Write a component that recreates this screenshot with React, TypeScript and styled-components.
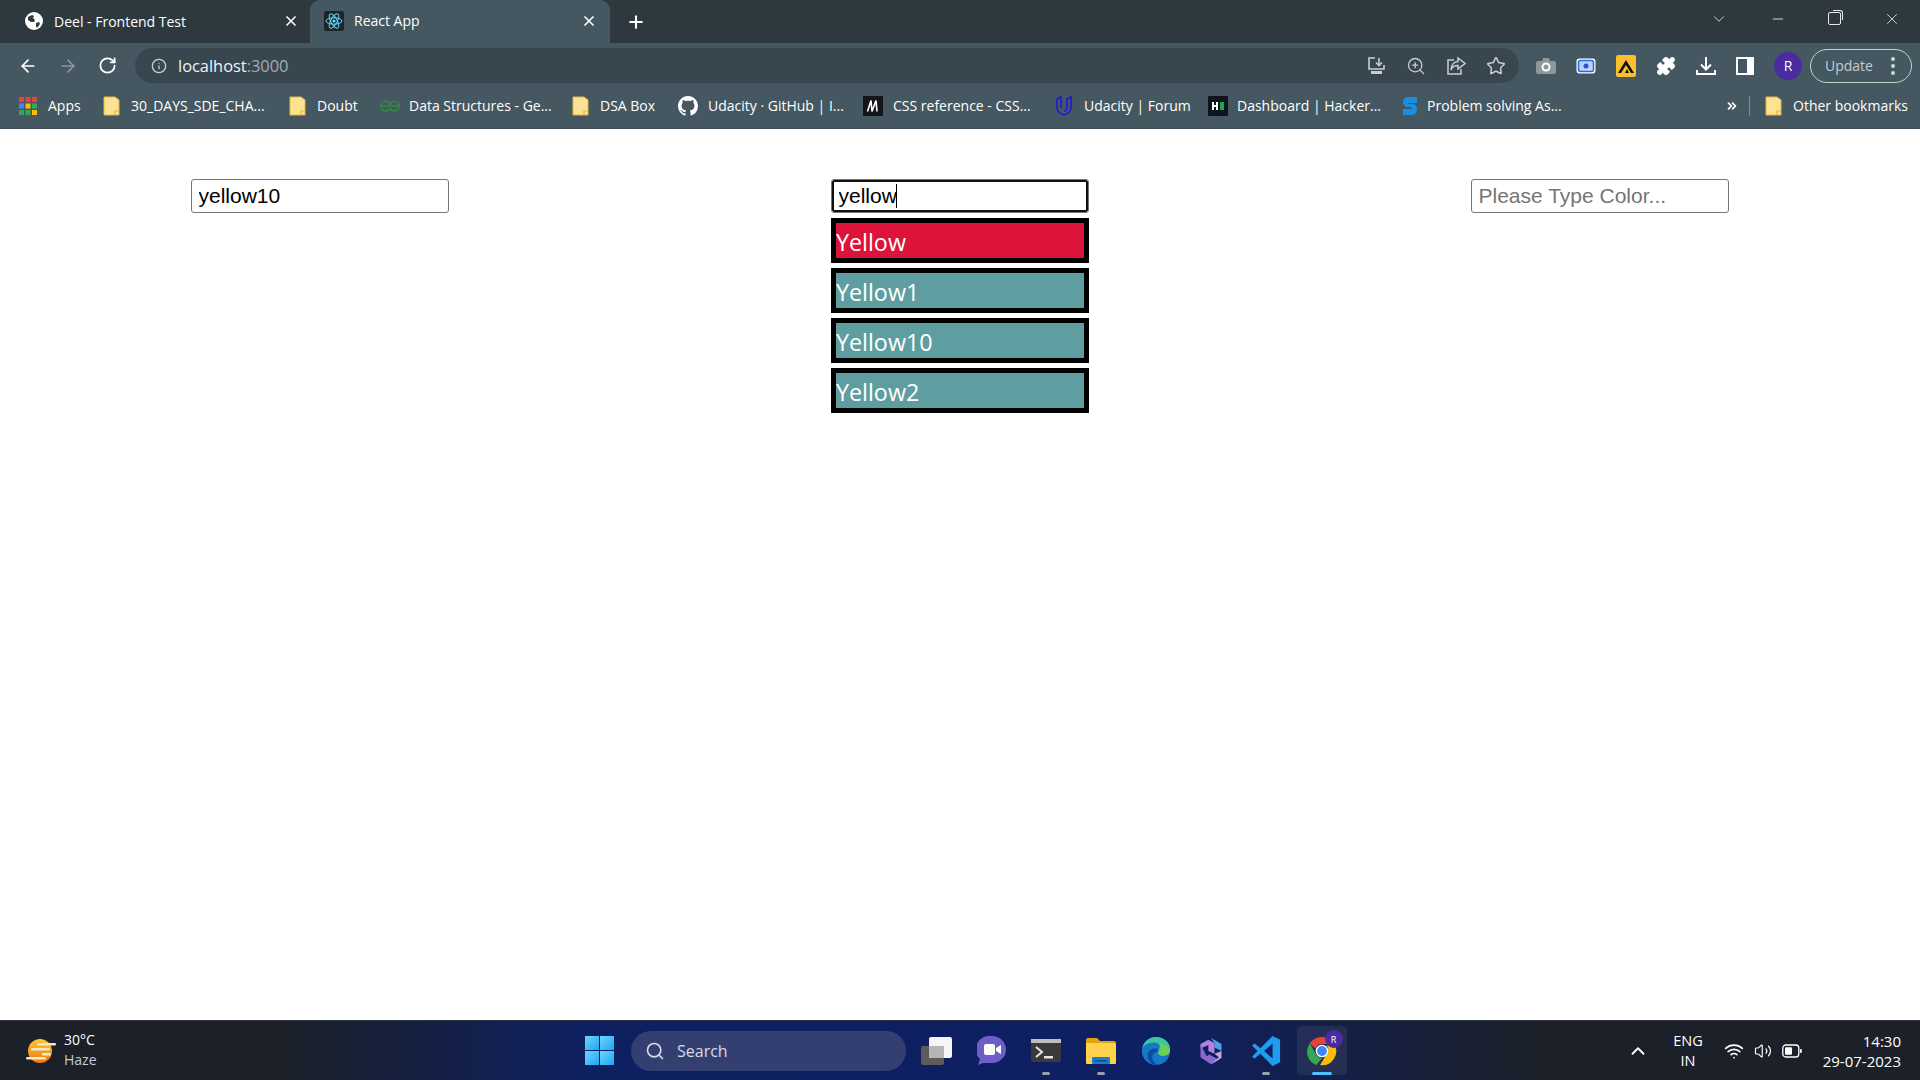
import React from "react";
import styled, { createGlobalStyle } from "styled-components";
import {
  ArrowLeft,
  ArrowRight,
  RotateCw,
  Info,
  ZoomIn,
  Star,
  Puzzle,
  X,
  Plus,
  Minus,
  ChevronDown,
  ChevronUp,
  ChevronsRight,
  Search,
  Wifi,
  Volume2,
} from "lucide-react";

const GlobalStyle = createGlobalStyle`
  html, body { margin: 0; padding: 0; height: 100%; background: #fff; overflow: hidden; }
  #root { height: 100%; }
`;

const UI_FONT = `"Open Sans", "Noto Sans", sans-serif`;

const Screen = styled.div`
  height: 1080px;
  display: flex;
  flex-direction: column;
  font-family: ${UI_FONT};
`;

/* ---------- browser chrome ---------- */

const TabStrip = styled.div`
  height: 43px;
  background: #2d383f;
  display: flex;
  align-items: flex-end;
  color: #fff;
  font-size: 14px;
`;

const Tab = styled.div<{ $active?: boolean; $w: number }>`
  width: ${(p) => p.$w}px;
  height: ${(p) => (p.$active ? 43 : 42)}px;
  background: ${(p) => (p.$active ? "#455761" : "transparent")};
  border-radius: 10px 10px 0 0;
  display: flex;
  align-items: center;
  padding: 0 ${(p) => (p.$active ? 13 : 11)}px 2px ${(p) => (p.$active ? 14 : 25)}px;
  box-sizing: border-box;
  gap: ${(p) => (p.$active ? 10 : 11)}px;
  flex-shrink: 0;
`;

const TabTitle = styled.span`
  flex: 1;
  white-space: nowrap;
`;

const NewTab = styled.div`
  margin-left: 16px;
  height: 42px;
  display: flex;
  align-items: center;
`;

const WindowControls = styled.div`
  margin-left: auto;
  height: 43px;
  display: flex;
  align-items: center;
  gap: 42px;
  padding: 0 19px 6px 0;
  box-sizing: border-box;
`;

const RestoreIcon = styled.div`
  width: 11px;
  height: 11px;
  border: 1px solid #e8eaed;
  border-radius: 2px;
  position: relative;
  &::after {
    content: "";
    position: absolute;
    top: -3px;
    right: -3px;
    width: 9px;
    height: 9px;
    border-top: 1px solid #e8eaed;
    border-right: 1px solid #e8eaed;
    border-radius: 0 3px 0 0;
  }
`;

const Toolbar = styled.div`
  height: 40px;
  background: #455761;
  display: flex;
  align-items: flex-end;
  padding-left: 18px;
  color: #fff;
`;

const NavButtons = styled.div`
  height: 35px;
  display: flex;
  align-items: center;
  gap: 20px;
  margin-right: 18px;
`;

const Omnibox = styled.div`
  width: 1384px;
  height: 35px;
  border-radius: 18px;
  background: #384650;
  display: flex;
  align-items: center;
  padding: 0 13px 0 16px;
  box-sizing: border-box;
  flex-shrink: 0;
`;

const Url = styled.span`
  margin-left: 11px;
  font-size: 16.4px;
  color: #f1f3f4;
  flex: 1;
`;

const UrlPort = styled.span`
  color: #a3adb3;
`;

const OmniActions = styled.div`
  display: flex;
  align-items: center;
  gap: 20px;
  color: #c7cdd1;
`;

const Extensions = styled.div`
  height: 35px;
  display: flex;
  align-items: center;
  gap: 20px;
  margin-left: 17px;
`;

const ProfileGroup = styled.div`
  display: flex;
  align-items: center;
  gap: 8px;
`;

const Avatar = styled.div<{ $size: number }>`
  width: ${(p) => p.$size}px;
  height: ${(p) => p.$size}px;
  border-radius: 50%;
  background: #4a2ca0;
  color: #fff;
  display: flex;
  align-items: center;
  justify-content: center;
  font-size: ${(p) => Math.round(p.$size / 2)}px;
`;

const UpdatePill = styled.div`
  width: 102px;
  height: 34px;
  border: 1px solid #c3d6c8;
  border-radius: 17px;
  display: flex;
  align-items: center;
  justify-content: space-between;
  padding: 0 16px 0 14px;
  box-sizing: border-box;
  font-size: 14px;
  color: #c4ced1;
`;

const Dots = styled.div`
  display: flex;
  flex-direction: column;
  gap: 3px;
  i {
    display: block;
    width: 4px;
    height: 4px;
    border-radius: 50%;
    background: #c9dccd;
  }
`;

const BookmarkBar = styled.div`
  height: 45px;
  background: #455761;
  border-bottom: 1px solid #3b4a53;
  box-sizing: content-box;
  display: flex;
  align-items: center;
  padding-left: 19px;
  color: #fff;
  font-size: 14px;
`;

const Bookmark = styled.div<{ $w: number; $gap?: number }>`
  width: ${(p) => p.$w}px;
  flex-shrink: 0;
  display: flex;
  align-items: center;
  gap: ${(p) => p.$gap ?? 11}px;
  white-space: nowrap;
`;

const BarEnd = styled.div`
  margin-left: auto;
  display: flex;
  align-items: center;
  padding-right: 12px;
`;

const Divider = styled.div`
  width: 1px;
  height: 20px;
  background: #7b8a93;
  margin: 0 15px 0 10px;
`;

/* ---------- page ---------- */

const Page = styled.main`
  flex: 1;
  background: #fff;
  display: flex;
  justify-content: space-around;
  align-items: flex-start;
  padding-top: 50px;
`;

const Column = styled.div`
  width: 258px;
  display: flex;
  flex-direction: column;
  gap: 5px;
`;

const Field = styled.div`
  position: relative;
  height: 34px;
`;

const ColorInput = styled.input<{ $focused?: boolean }>`
  width: 100%;
  height: 34px;
  box-sizing: border-box;
  display: block;
  padding: 1px 6px 1px 6.5px;
  border: 1px solid #767676;
  border-radius: 3px;
  font-family: "Liberation Sans", Arial, sans-serif;
  font-size: 21px;
  color: #000;
  background: #fff;
  outline: none;
  caret-color: transparent;
  box-shadow: ${(p) => (p.$focused ? "inset 0 0 0 2px #101010" : "none")};
  &::placeholder {
    color: #757575;
    opacity: 1;
  }
`;

const Caret = styled.span`
  position: absolute;
  left: 65px;
  top: 5px;
  width: 1px;
  height: 24px;
  background: #000;
`;

const Suggestion = styled.div<{ $active?: boolean }>`
  height: 45px;
  box-sizing: border-box;
  border: 5px solid #000;
  background: ${(p) => (p.$active ? "#dc143c" : "#5f9ea0")};
  color: #fff;
  font-family: ${UI_FONT};
  font-size: 23.3px;
  line-height: 38px;
  white-space: nowrap;
`;

/* ---------- taskbar ---------- */

const Taskbar = styled.div`
  height: 60px;
  box-sizing: border-box;
  border-top: 1px solid #2c3140;
  background: linear-gradient(90deg, #1b2029 0%, #1b2029 15%, #0f2060 30%, #0e1f62 60%, #1b2029 80%, #1b2029 100%);
  display: flex;
  align-items: center;
  color: #fff;
  position: relative;
`;

const Weather = styled.div`
  width: 585px;
  flex-shrink: 0;
  display: flex;
  align-items: center;
  gap: 8px;
  padding-left: 26px;
  box-sizing: border-box;
`;

const WeatherText = styled.div`
  font-size: 14px;
  line-height: 20px;
  margin-top: -2px;
  span {
    display: block;
    color: #c8ccd2;
  }
`;

const StartLogo = styled.div`
  width: 29px;
  height: 29px;
  display: grid;
  grid-template-columns: 1fr 1fr;
  gap: 1px;
  margin-right: 17px;
  i {
    display: block;
    background: linear-gradient(135deg, #6fd6fb, #1ea5f5);
  }
`;

const SearchBox = styled.div`
  width: 275px;
  height: 40px;
  border-radius: 20px;
  background: #333f70;
  display: flex;
  align-items: center;
  gap: 12px;
  padding-left: 14px;
  box-sizing: border-box;
  font-size: 16px;
  color: #d8dbe4;
  margin-right: 2.5px;
`;

const TaskIcon = styled.div<{ $active?: boolean }>`
  width: 50px;
  height: 49px;
  margin: 0 ${(p) => (p.$active ? 3 : 2.5)}px;
  border-radius: 5px;
  background: ${(p) => (p.$active ? "rgba(255,255,255,0.07)" : "transparent")};
  display: flex;
  align-items: center;
  justify-content: center;
  position: relative;
`;

const RunDot = styled.i<{ $active?: boolean }>`
  position: absolute;
  bottom: 0;
  left: 50%;
  transform: translateX(-50%);
  width: ${(p) => (p.$active ? 20 : 8)}px;
  height: 3px;
  border-radius: 2px;
  background: ${(p) => (p.$active ? "#4cc2ff" : "#9aa0ab")};
`;

const Tray = styled.div`
  margin-left: auto;
  display: flex;
  align-items: center;
  padding-right: 19px;
`;

const Lang = styled.div`
  font-size: 14.5px;
  line-height: 20px;
  text-align: center;
  margin: 0 21px 0 24px;
`;

const TrayIcons = styled.div`
  display: flex;
  align-items: center;
  gap: 10px;
  margin-right: 21px;
`;

const Clock = styled.div`
  font-size: 15px;
  line-height: 20px;
  text-align: right;
`;

const ProfileBadge = styled.div`
  position: absolute;
  top: 4px;
  right: 4px;
`;

/* ---------- drawn icons ---------- */

const GlobeIcon = () => (
  <svg width="18" height="18" viewBox="0 0 18 18">
    <circle cx="9" cy="9" r="9" fill="#fff" />
    <path d="M3 5l4-2 2 1-1 2 2 2-1 2H6L3 8zM11 11l3-1 1 2-3 4-1-2z" fill="#2d383f" />
  </svg>
);

const ReactIcon = () => (
  <svg width="20" height="20" viewBox="0 0 20 20">
    <rect width="20" height="20" rx="2" fill="#20232a" />
    <g fill="none" stroke="#61dafb" strokeWidth="1">
      <ellipse cx="10" cy="10" rx="8" ry="3.2" />
      <ellipse cx="10" cy="10" rx="8" ry="3.2" transform="rotate(60 10 10)" />
      <ellipse cx="10" cy="10" rx="8" ry="3.2" transform="rotate(120 10 10)" />
    </g>
    <circle cx="10" cy="10" r="1.6" fill="#61dafb" />
  </svg>
);

const AppsIcon = () => {
  const colors = ["#ea4335", "#ea4335", "#ea4335", "#4285f4", "#fbbc04", "#34a853", "#34a853", "#34a853", "#fbbc04"];
  return (
    <svg width="18" height="18" viewBox="0 0 18 18">
      {colors.map((c, i) => (
        <rect key={i} x={(i % 3) * 6.5} y={Math.floor(i / 3) * 6.5} width="5" height="5" fill={c} />
      ))}
    </svg>
  );
};

const FolderIcon = () => (
  <svg width="17" height="20" viewBox="0 0 17 20">
    <path d="M1 1h11l4 3v15H1z" fill="#fde293" stroke="#e3b93f" strokeWidth="1" />
    <path d="M12 19v-4h4" fill="none" stroke="#e3b93f" strokeWidth="1.2" />
  </svg>
);

const GfgIcon = () => (
  <svg width="20" height="12" viewBox="0 0 20 12" fill="none" stroke="#2f8d46" strokeWidth="1.5">
    <path d="M1 6h18M10 6c0-3-2-5-4.500-5S1 3 1 6s2 5 4.500 5c2 0 3.500-1 4.500-3M10 6c0-3 2-5 4.500-5S19 3 19 6s-2 5-4.500 5c-2 0-3.500-1-4.500-3" />
  </svg>
);

const GithubIcon = () => (
  <svg width="20" height="20" viewBox="0 0 16 16" fill="#fff">
    <path d="M8 0C3.580 0 0 3.580 0 8c0 3.540 2.290 6.530 5.470 7.590.4.070.55-.17.55-.38 0-.19-.01-.82-.01-1.490-2.010.37-2.530-.49-2.690-.94-.09-.23-.48-.94-.82-1.130-.28-.15-.68-.52-.01-.53.63-.01 1.080.58 1.230.82.720 1.210 1.870.870 2.330.660.070-.52.280-.870.510-1.070-1.780-.2-3.640-.89-3.640-3.950 0-.87.310-1.590.820-2.150-.08-.2-.36-1.020.08-2.120 0 0 .67-.21 2.200.820.640-.18 1.320-.27 2-.27s1.360.09 2 .27c1.530-1.040 2.200-.82 2.200-.82.440 1.100.160 1.920.080 2.120.510.560.820 1.270.820 2.150 0 3.070-1.870 3.750-3.650 3.950.29.250.540.730.540 1.480 0 1.070-.01 1.930-.01 2.200 0 .210.150.460.550.380A8.010 8.010 0 0016 8c0-4.420-3.580-8-8-8z" />
  </svg>
);

const MdnIcon = () => (
  <svg width="20" height="20" viewBox="0 0 20 20">
    <rect width="20" height="20" fill="#15141a" />
    <path d="M4.500 15.500L8 4.500l1 11 4-11 1 11" fill="none" stroke="#fff" strokeWidth="1.600" />
  </svg>
);

const UdacityIcon = () => (
  <svg width="18" height="20" viewBox="0 0 18 20" fill="none" stroke="#2015d8" strokeWidth="1.600">
    <path d="M2 3v9c0 3 3 6 7 7 4-1 7-4 7-7V1l-4 2v9c0 1.500-1.500 3-3 3" />
    <path d="M2 3l4-2v11" />
  </svg>
);

const HackerRankIcon = () => (
  <svg width="20" height="20" viewBox="0 0 20 20">
    <rect width="20" height="20" rx="1" fill="#0e141e" />
    <path d="M4 6h2v3h2V6h2v8H8v-3H6v3H4z" fill="#fff" />
    <rect x="12" y="6" width="4" height="8" fill="#1ba94c" />
  </svg>
);

const SIcon = () => (
  <svg width="16" height="20" viewBox="0 0 16 20">
    <path d="M15 1H6C3 1 1 3 1 6s2 5 5 5h3c1 0 1 2 0 2H1v6h9c3 0 5-3 5-6s-2-5-5-5H7c-1 0-1-1 0-1h8z" fill="#1a8fe0" />
  </svg>
);

const InstallIcon = () => (
  <svg width="20" height="20" viewBox="0 0 20 20" fill="none" stroke="#c7cdd1" strokeWidth="1.600">
    <path d="M9 2H3v11h15V9" />
    <path d="M13 2v7M10 6.500l3 3 3-3" />
    <rect x="5" y="15" width="11" height="3" fill="#c7cdd1" stroke="none" />
  </svg>
);

const ShareIcon = () => (
  <svg width="20" height="20" viewBox="0 0 20 20" fill="none" stroke="#c7cdd1" strokeWidth="1.500">
    <path d="M8 4H2v14h13v-5" />
    <path d="M12 2l7 5.500-7 5.500V9.500C8.500 9.500 6 11 5 14c0-5 3-8.500 7-8.500z" />
  </svg>
);

const CameraIcon = () => (
  <svg width="20" height="18" viewBox="0 0 20 18">
    <path d="M2 4h4l1-3h6l1 3h4a2 2 0 012 2v9a2 2 0 01-2 2H2a2 2 0 01-2-2V6a2 2 0 012-2z" fill="#8e979c" />
    <circle cx="10" cy="10" r="4.500" fill="#fff" />
    <circle cx="10" cy="10" r="2.500" fill="#8e979c" />
  </svg>
);

const RecordIcon = () => (
  <svg width="20" height="16" viewBox="0 0 20 16">
    <rect x="0.500" y="0.500" width="19" height="15" rx="3" fill="#fff" />
    <rect x="2.500" y="2.500" width="15" height="11" rx="2" fill="#bcd4f8" stroke="#1a6fe0" strokeWidth="1.500" />
    <circle cx="10" cy="8" r="2.500" fill="#3450d0" />
  </svg>
);

const YellowExtIcon = () => (
  <svg width="20" height="22" viewBox="0 0 20 22">
    <rect width="20" height="22" rx="2" fill="#fbc02d" />
    <path d="M2 18L10 5l8 13h-3L10 10l-5 8z" fill="#111" />
    <path d="M9 18l2-4 2 4z" fill="#111" />
  </svg>
);

const DownloadIcon = () => (
  <svg width="20" height="20" viewBox="0 0 20 20" fill="none" stroke="#fff" strokeWidth="2">
    <path d="M10 1v12M5 8.500l5 5 5-5M1 14v4h18v-4" />
  </svg>
);

const SidePanelIcon = () => (
  <svg width="18" height="18" viewBox="0 0 18 18">
    <rect width="18" height="18" fill="#fff" />
    <rect x="2" y="2" width="9" height="14" fill="#455761" />
  </svg>
);

const WeatherIcon = () => (
  <svg width="30" height="30" viewBox="0 0 30 30">
    <defs>
      <linearGradient id="sun" x1="0" y1="0" x2="0" y2="1">
        <stop offset="0" stopColor="#fdc830" />
        <stop offset="1" stopColor="#ee7a10" />
      </linearGradient>
    </defs>
    <circle cx="14" cy="15" r="12" fill="url(#sun)" />
    <g fill="#f6e7c8">
      <rect x="11" y="7" width="19" height="2.500" rx="1.200" />
      <rect x="5" y="12" width="19" height="2.500" rx="1.200" />
      <rect x="16" y="17" width="9" height="2.500" rx="1.200" />
      <rect x="0" y="21" width="20" height="2.500" rx="1.200" />
    </g>
  </svg>
);

const TaskViewIcon = () => (
  <svg width="31" height="28" viewBox="0 0 31 28">
    <rect x="0" y="9" width="23" height="19" rx="2" fill="#5c5c5c" />
    <rect x="8" y="0" width="23" height="21" rx="2" fill="#f5f5f5" />
    <rect x="8" y="9" width="15" height="12" fill="#b5b5b5" />
  </svg>
);

const MeetIcon = () => (
  <svg width="29" height="29" viewBox="0 0 29 29">
    <path d="M15 0a14 13.500 0 110 27H6l-5 2 2-6A14 13.500 0 0115 0z" fill="#6c5fc7" />
    <rect x="7" y="8" width="11" height="11" rx="2" fill="#fff" />
    <path d="M19 12l5-3v9l-5-3z" fill="#fff" />
  </svg>
);

const TerminalIcon = () => (
  <svg width="30" height="23" viewBox="0 0 30 23">
    <rect width="30" height="23" rx="2" fill="#3a3a3a" />
    <rect width="30" height="4" fill="#bdbdbd" />
    <path d="M5 8l6 5-6 5" fill="none" stroke="#e5e5e5" strokeWidth="2" />
    <rect x="13" y="17" width="9" height="2.500" fill="#e5e5e5" />
  </svg>
);

const ExplorerIcon = () => (
  <svg width="30" height="26" viewBox="0 0 30 26">
    <path d="M0 2a2 2 0 012-2h9l3 3h14a2 2 0 012 2v3H0z" fill="#e0a30e" />
    <rect y="5" width="30" height="21" rx="1" fill="#ffd24d" />
    <rect x="6" y="19" width="18" height="7" rx="1" fill="#1a7ed0" />
    <rect x="9" y="22" width="12" height="1.500" fill="#0c4a8a" />
  </svg>
);

const EdgeIcon = () => (
  <svg width="30" height="30" viewBox="0 0 32 32">
    <circle cx="16" cy="16" r="15" fill="#1679c8" />
    <path d="M1 15C2 6 9 1 16 1c9 0 15 6 15 13 0 5-4 7-8 7-3 0-5-2-5-4s2-3 2-5c0-4-3-5-6-5C7 7 2 10 1 15z" fill="#3bc8a0" />
    <path d="M20 8c6 1 10 4 11 8 0 3-3 5-8 5-2 0-4-1-5-3 2 0 3-1 3-4 0-2-1-4-1-6z" fill="#6ed04c" />
    <path d="M18 17c-3 0-6 2-6 6 0 3 2 6 6 8-8 0-11-6-11-10 0-5 4-8 8-8 3 0 4 2 3 4z" fill="#0c4f9e" />
  </svg>
);

const CopilotIcon = () => (
  <svg width="26" height="28" viewBox="0 0 28 32">
    <path d="M14 1l12 7v8l-8-4V7z" fill="#4aa3e0" />
    <path d="M2 8l9-5 7 4v12l-7-3V9L2 13z" fill="#b084e0" />
    <path d="M2 8v15l12 8 9-5-11-6-3 2z" fill="#8a6ad0" />
    <path d="M26 16v8l-12 7 9-8-5-4z" fill="#c7a4e8" />
  </svg>
);

const VsCodeIcon = () => (
  <svg width="30" height="30" viewBox="0 0 30 32">
    <path d="M22 0l8 4v24l-8 4-13-13-6 5-3-2 6-6-6-6 3-2 6 5z" fill="#1f9cf0" />
    <path d="M22 8l-9 8 9 8z" fill="#0e1f62" />
  </svg>
);

const ChromeIcon = () => (
  <svg width="30" height="30" viewBox="0 0 32 32">
    <path d="M16 1a15 15 0 0113 7.500H16a7.500 7.500 0 00-7 4.700L3 8A15 15 0 0116 1z" fill="#ea4335" />
    <path d="M3 8l6.500 11.300A7.500 7.500 0 0016 23.500L10 31A15 15 0 013 8z" fill="#34a853" />
    <path d="M29 8.500A15 15 0 0114 31l6.500-11A7.500 7.500 0 0021 10z" fill="#fbbc04" />
    <circle cx="16" cy="16" r="6" fill="#4285f4" stroke="#fff" strokeWidth="1.500" />
  </svg>
);

const BatteryIcon = () => (
  <svg width="20" height="14" viewBox="0 0 20 14" fill="none">
    <rect x="0.800" y="1" width="16" height="12" rx="3" stroke="#fff" strokeWidth="1.300" />
    <rect x="3" y="3.200" width="7" height="7.600" rx="1" fill="#fff" />
    <rect x="18" y="5" width="1.800" height="4" rx="0.800" fill="#fff" />
  </svg>
);

/* ---------- data ---------- */

const bookmarks: { label: string; icon: React.ReactNode; w: number; gap?: number }[] = [
  { label: "Apps", icon: <AppsIcon />, w: 84 },
  { label: "30_DAYS_SDE_CHA...", icon: <FolderIcon />, w: 186 },
  { label: "Doubt", icon: <FolderIcon />, w: 91 },
  { label: "Data Structures - Ge...", icon: <GfgIcon />, w: 192, gap: 9 },
  { label: "DSA Box", icon: <FolderIcon />, w: 106 },
  { label: "Udacity · GitHub | I...", icon: <GithubIcon />, w: 185, gap: 10 },
  { label: "CSS reference - CSS...", icon: <MdnIcon />, w: 192, gap: 10 },
  { label: "Udacity | Forum", icon: <UdacityIcon />, w: 153 },
  { label: "Dashboard | Hacker...", icon: <HackerRankIcon />, w: 194, gap: 9 },
  { label: "Problem solving As...", icon: <SIcon />, w: 300, gap: 9 },
];

const columns = ["yellow10", "yellow", ""];
const suggestions = ["Yellow", "Yellow1", "Yellow10", "Yellow2"];

const taskIcons: { icon: React.ReactNode; running?: boolean }[] = [
  { icon: <TaskViewIcon /> },
  { icon: <MeetIcon /> },
  { icon: <TerminalIcon />, running: true },
  { icon: <ExplorerIcon />, running: true },
  { icon: <EdgeIcon /> },
  { icon: <CopilotIcon /> },
  { icon: <VsCodeIcon />, running: true },
];

export default function App() {
  return (
    <Screen>
      <GlobalStyle />
      <TabStrip>
        <Tab $w={310}>
          <GlobeIcon />
          <TabTitle>Deel - Frontend Test</TabTitle>
          <X size={16} strokeWidth={2.5} />
        </Tab>
        <Tab $w={300} $active>
          <ReactIcon />
          <TabTitle>React App</TabTitle>
          <X size={16} strokeWidth={2.5} />
        </Tab>
        <NewTab>
          <Plus size={20} strokeWidth={2.5} />
        </NewTab>
        <WindowControls>
          <ChevronDown size={18} strokeWidth={1} />
          <Minus size={16} strokeWidth={1.2} />
          <RestoreIcon />
          <X size={18} strokeWidth={1} />
        </WindowControls>
      </TabStrip>

      <Toolbar>
        <NavButtons>
          <ArrowLeft size={20} strokeWidth={2} />
          <ArrowRight size={20} strokeWidth={2} color="#8c979e" />
          <RotateCw size={19} strokeWidth={2.2} />
        </NavButtons>
        <Omnibox>
          <Info size={16} color="#c7cdd1" strokeWidth={2} />
          <Url>
            localhost<UrlPort>:3000</UrlPort>
          </Url>
          <OmniActions>
            <InstallIcon />
            <ZoomIn size={20} strokeWidth={1.6} />
            <ShareIcon />
            <Star size={20} strokeWidth={1.8} />
          </OmniActions>
        </Omnibox>
        <Extensions>
          <CameraIcon />
          <RecordIcon />
          <YellowExtIcon />
          <Puzzle size={20} fill="#fff" strokeWidth={1.500} />
          <DownloadIcon />
          <SidePanelIcon />
          <ProfileGroup>
            <Avatar $size={28}>R</Avatar>
            <UpdatePill>
              Update
              <Dots>
                <i />
                <i />
                <i />
              </Dots>
            </UpdatePill>
          </ProfileGroup>
        </Extensions>
      </Toolbar>

      <BookmarkBar>
        {bookmarks.map((b) => (
          <Bookmark key={b.label} $w={b.w} $gap={b.gap}>
            {b.icon}
            {b.label}
          </Bookmark>
        ))}
        <BarEnd>
          <ChevronsRight size={14} strokeWidth={3} />
          <Divider />
          <Bookmark $w={143} $gap={11}>
            <FolderIcon />
            Other bookmarks
          </Bookmark>
        </BarEnd>
      </BookmarkBar>

      <Page>
        {columns.map((value, i) => (
          <Column key={i}>
            <Field>
              <ColorInput
                readOnly
                value={value}
                placeholder="Please Type Color..."
                $focused={i === 1}
              />
              {i === 1 && <Caret />}
            </Field>
            {i === 1 &&
              suggestions.map((s, j) => (
                <Suggestion key={s} $active={j === 0}>
                  {s}
                </Suggestion>
              ))}
          </Column>
        ))}
      </Page>

      <Taskbar>
        <Weather>
          <WeatherIcon />
          <WeatherText>
            30°C
            <span>Haze</span>
          </WeatherText>
        </Weather>
        <StartLogo>
          <i />
          <i />
          <i />
          <i />
        </StartLogo>
        <SearchBox>
          <Search size={20} strokeWidth={2} />
          Search
        </SearchBox>
        {taskIcons.map((t, i) => (
          <TaskIcon key={i}>
            {t.icon}
            {t.running && <RunDot />}
          </TaskIcon>
        ))}
        <TaskIcon $active>
          <ChromeIcon />
          <ProfileBadge>
            <Avatar $size={18}>R</Avatar>
          </ProfileBadge>
          <RunDot $active />
        </TaskIcon>
        <Tray>
          <ChevronUp size={22} strokeWidth={2} />
          <Lang>
            ENG
            <br />
            IN
          </Lang>
          <TrayIcons>
            <Wifi size={20} strokeWidth={2} />
            <Volume2 size={18} strokeWidth={1.600} />
            <BatteryIcon />
          </TrayIcons>
          <Clock>
            14:30
            <br />
            29-07-2023
          </Clock>
        </Tray>
      </Taskbar>
    </Screen>
  );
}
